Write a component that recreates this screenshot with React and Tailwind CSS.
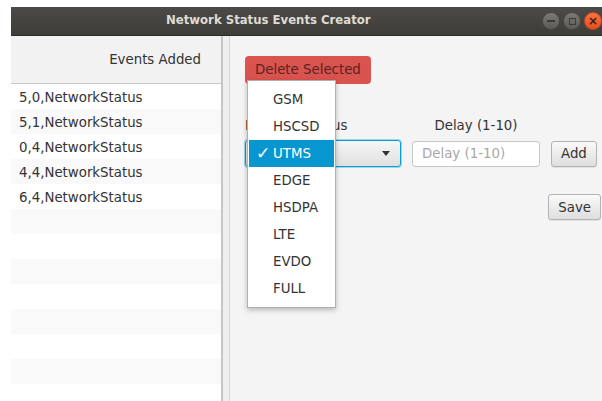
const events = [
  '5,0,NetworkStatus',
  '5,1,NetworkStatus',
  '0,4,NetworkStatus',
  '4,4,NetworkStatus',
  '6,4,NetworkStatus',
];

const networkTypes = ['GSM', 'HSCSD', 'UTMS', 'EDGE', 'HSDPA', 'LTE', 'EVDO', 'FULL'];

const fxButton =
  'h-[26px] px-[9px] rounded-[3px] border border-[#b3b3b3] bg-gradient-to-b from-[#fafafa] to-[#dedede] text-[#333] shadow-[0_1px_0_rgba(0,0,0,0.08)]';

const TitleBar = () => (
  <div className="h-[29px] shrink-0 flex items-center bg-gradient-to-b from-[#4b4a46] to-[#3d3c38] border-b border-[#2e2d2a]">
    <span className="ml-[155px] text-[11.7px] font-bold text-[#dfdbd2]">
      Network Status Events Creator
    </span>
    <div className="ml-auto flex items-center gap-[3px]">
      <div className="w-[18px] h-[18px] rounded-full bg-gradient-to-b from-[#7a7973] to-[#5c5b56] border border-[#4a4945] flex items-center justify-center">
        <div className="w-[8px] h-[2px] bg-[#3c3b37]" />
      </div>
      <div className="w-[18px] h-[18px] rounded-full bg-gradient-to-b from-[#7a7973] to-[#5c5b56] border border-[#4a4945] flex items-center justify-center">
        <div className="w-[7px] h-[7px] border-[1.5px] border-[#3c3b37]" />
      </div>
      <div className="w-[18px] h-[18px] rounded-full bg-gradient-to-b from-[#f47345] to-[#e14f1c] border border-[#c8431c] flex items-center justify-center text-[12px] leading-none font-bold text-[#4a1706]">
        ×
      </div>
    </div>
  </div>
);

const EventList = () => (
  <div className="w-[210px] shrink-0 bg-white flex flex-col">
    <div className="h-[48px] shrink-0 bg-[#f2f2f2] border-b border-[#c8c8c8] flex items-center justify-end pr-[20px] pt-[1px] text-[#333]">
      Events Added
    </div>
    {Array.from({ length: 13 }).map((_, i) => (
      <div
        key={i}
        className={`h-[25px] shrink-0 flex items-center pl-[8px] pt-[2px] text-[#333] ${i % 2 === 1 ? 'bg-[#f9f9f9]' : 'bg-white'}`}
      >
        {events[i] || ''}
      </div>
    ))}
  </div>
);

const NetworkPopup = () => (
  <div className="absolute left-[17px] top-[44px] w-[89px] bg-white border border-[#b0b0b0] shadow-[0_2px_5px_rgba(0,0,0,0.25)] py-[5px] px-[1px]">
    {networkTypes.map((t) => {
      const selected = t === 'UTMS';
      return (
        <div
          key={t}
          className={`relative h-[27px] flex items-center pl-[24px] pt-[1px] ${selected ? 'bg-[#0896d1] text-white' : 'text-[#333]'}`}
        >
          {selected && (
            <span className="absolute left-[7px] top-[5px] text-[17px] leading-none">✓</span>
          )}
          {t}
        </div>
      );
    })}
  </div>
);

const CreatorForm = () => (
  <div className="relative flex-1 bg-[#f4f4f4] pl-[15px] pt-[20px] flex flex-col">
    <div>
      <button className="h-[28px] px-[10px] rounded-[4px] bg-[#d9534f] text-[#5a2321]">
        Delete Selected
      </button>
    </div>

    <div className="mt-[35px] flex text-[#333]">
      <span className="w-[156px]">Network Status</span>
      <span className="ml-[11px] w-[128px] text-center">Delay (1-10)</span>
    </div>

    <div className="mt-[8px] flex items-center">
      <div className="w-[156px] h-[27px] rounded-[3px] border border-[#039ed3] shadow-[0_0_0_1px_rgba(3,158,211,0.35)] bg-gradient-to-b from-[#f6f6f6] to-[#e0e0e0] flex items-center justify-end pr-[10px]">
        <div className="w-0 h-0 border-l-[4px] border-r-[4px] border-t-[5px] border-l-transparent border-r-transparent border-t-[#333]" />
      </div>
      <div className="ml-[11px] w-[128px] h-[26px] rounded-[3px] border border-[#c6c6c6] bg-white flex items-center pl-[9px] text-[#a8a8a8]">
        Delay (1-10)
      </div>
      <button className={`ml-[11px] ${fxButton}`}>Add</button>
    </div>

    <div className="mt-[27px] flex justify-end pr-[1px]">
      <button className={fxButton}>Save</button>
    </div>

    <NetworkPopup />
  </div>
);

export default function App() {
  return (
    <div
      className="w-[602px] h-[401px] overflow-hidden bg-white pl-[11px] pt-[7px] text-[13.33px] leading-none"
      style={{ fontFamily: '"DejaVu Sans", sans-serif' }}
    >
      <div className="h-full flex flex-col">
        <TitleBar />
        <div className="flex-1 flex min-h-0">
          <EventList />
          <div className="w-[9px] shrink-0 bg-[#efefef] border-l-2 border-[#c6c6c6] border-r border-r-[#d6d6d6]" />
          <CreatorForm />
        </div>
      </div>
    </div>
  );
}
